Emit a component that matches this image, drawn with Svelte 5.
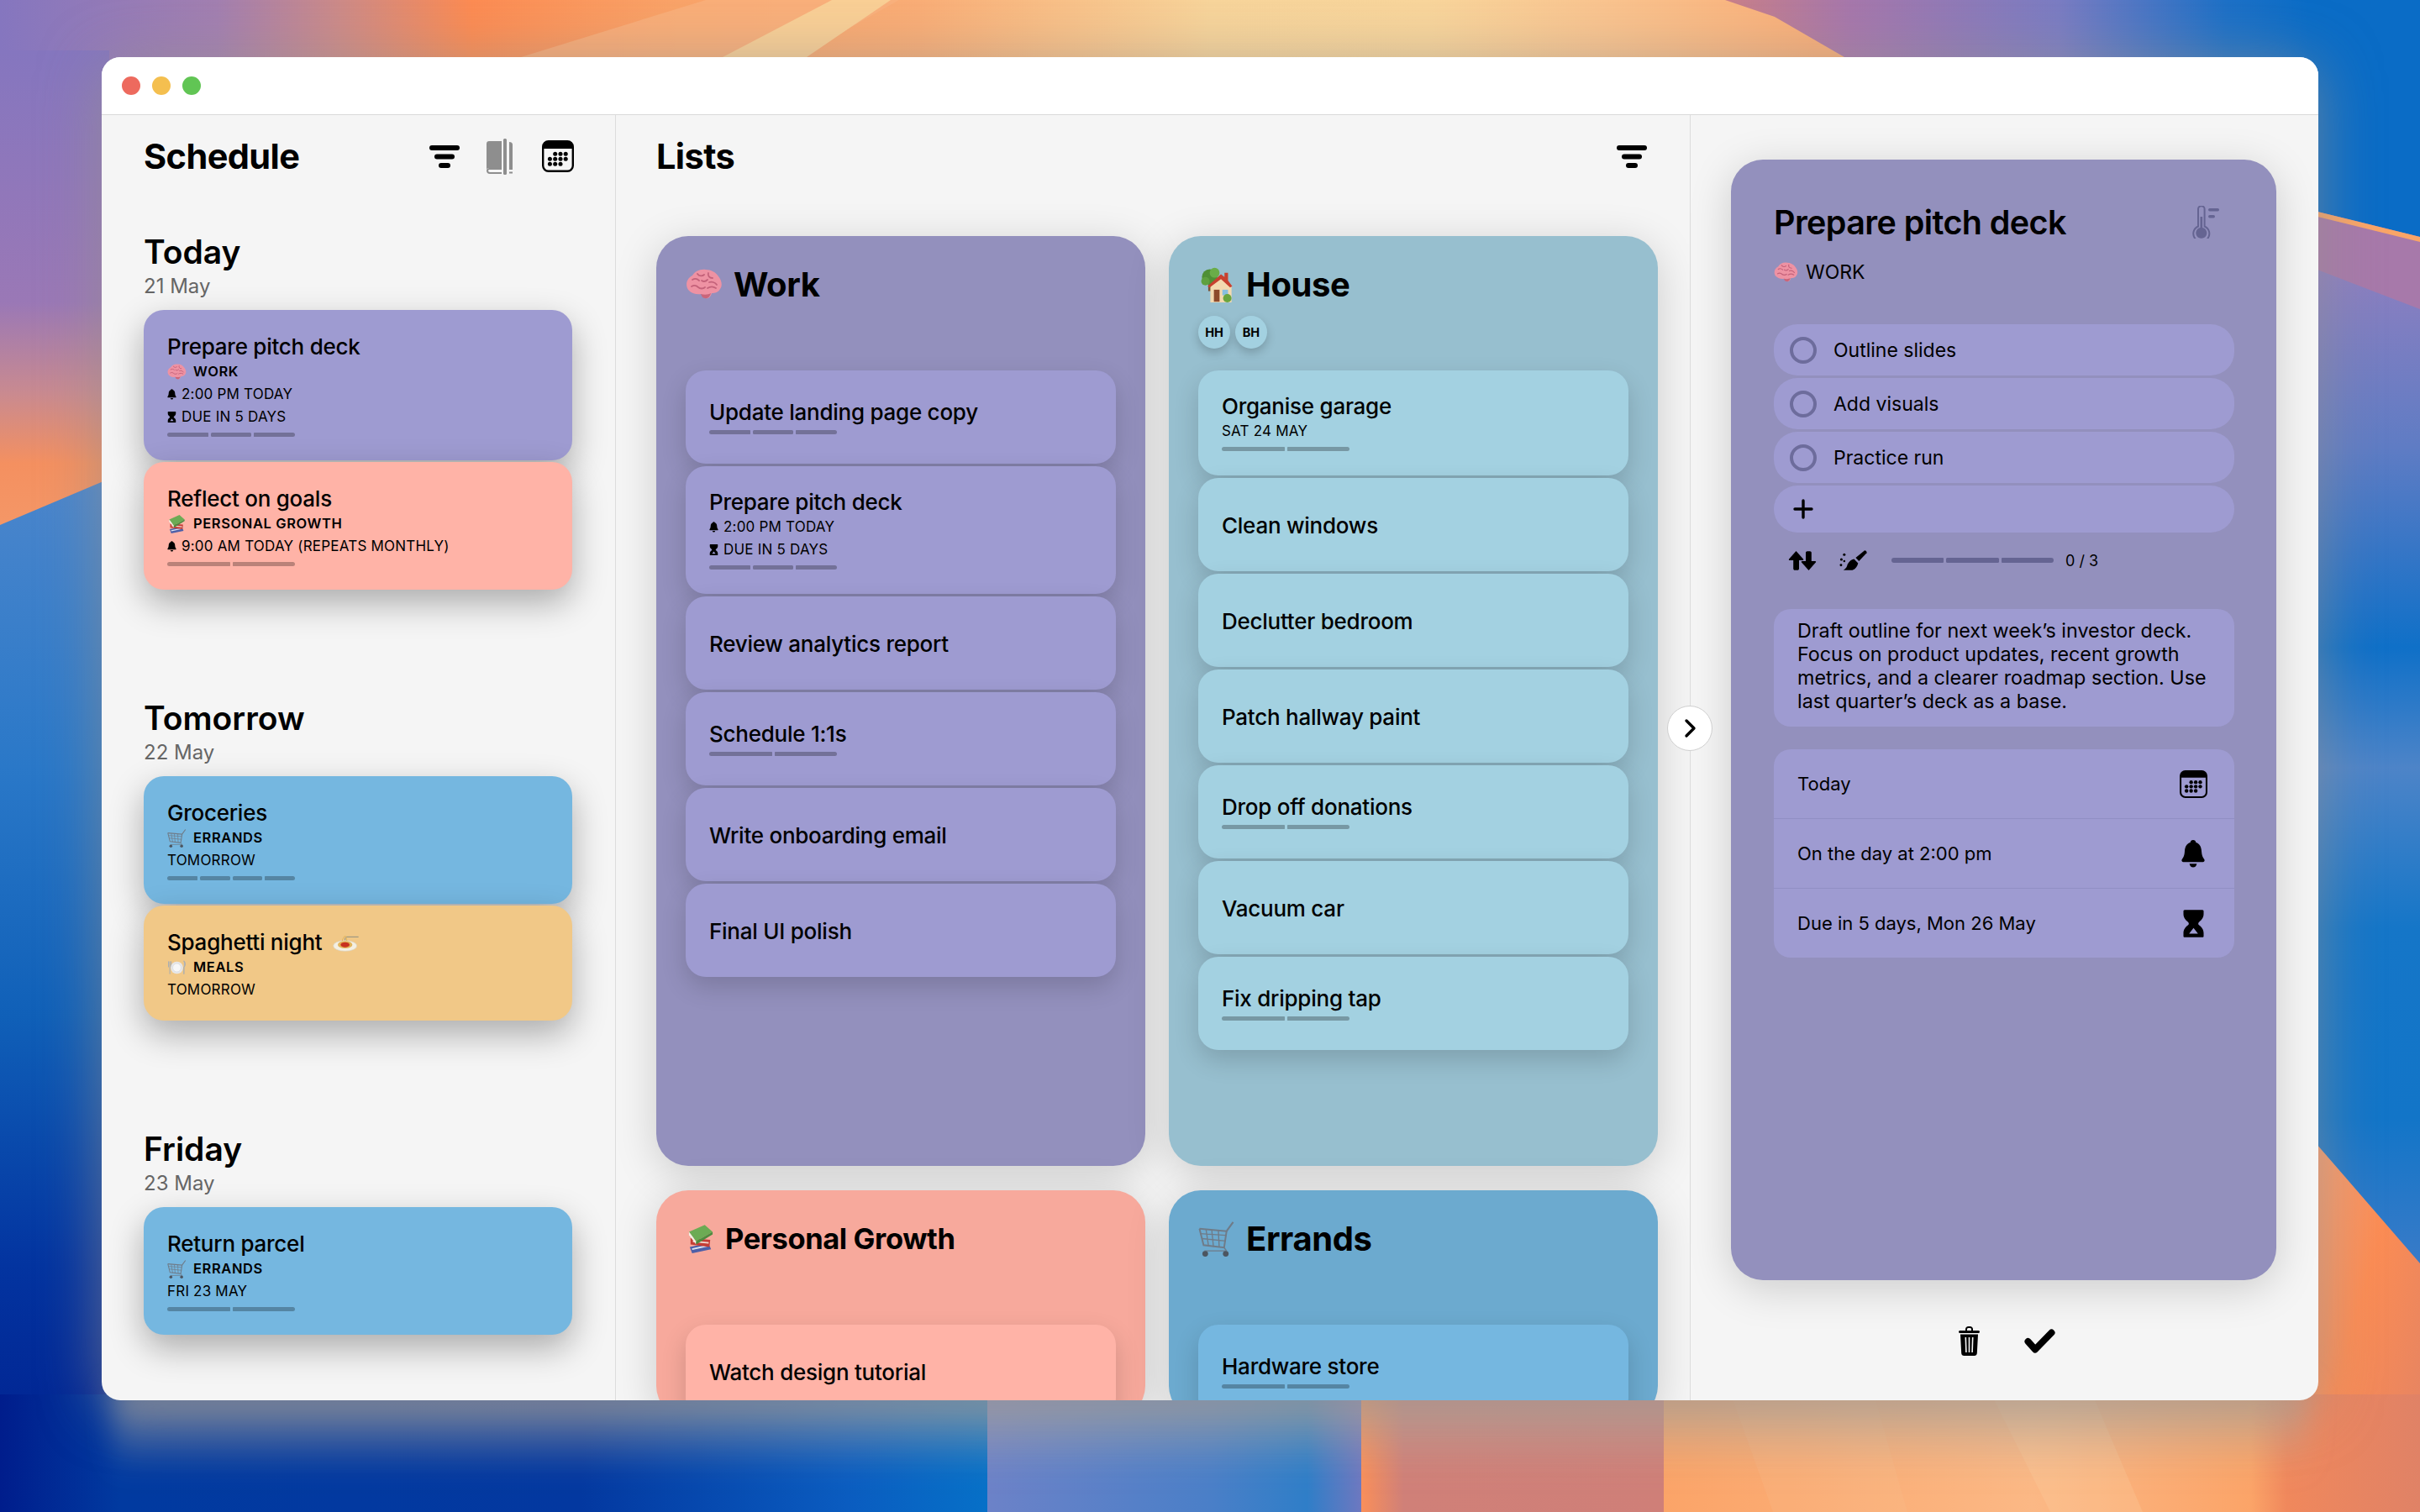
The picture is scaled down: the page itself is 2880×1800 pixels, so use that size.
<script lang="ts">
	type Task = {
		title: string;
		cat?: { icon: string; name: string };
		time?: string;
		due?: string;
		date?: string;
		bars?: number;
	};

	const work = { icon: 'brain', name: 'WORK' };
	const growth = { icon: 'books', name: 'PERSONAL GROWTH' };
	const errands = { icon: 'cart', name: 'ERRANDS' };
	const meals = { icon: 'plate', name: 'MEALS' };

	const schedule: { day: string; date: string; tasks: (Task & { tone: string; dish?: boolean })[] }[] = [
		{
			day: 'Today',
			date: '21 May',
			tasks: [
				{ title: 'Prepare pitch deck', tone: 'purple', cat: work, time: '2:00 PM TODAY', due: 'DUE IN 5 DAYS', bars: 3 },
				{ title: 'Reflect on goals', tone: 'salmon', cat: growth, time: '9:00 AM TODAY (REPEATS MONTHLY)', bars: 2 }
			]
		},
		{
			day: 'Tomorrow',
			date: '22 May',
			tasks: [
				{ title: 'Groceries', tone: 'blue', cat: errands, date: 'TOMORROW', bars: 4 },
				{ title: 'Spaghetti night', tone: 'sand', cat: meals, date: 'TOMORROW', dish: true }
			]
		},
		{
			day: 'Friday',
			date: '23 May',
			tasks: [{ title: 'Return parcel', tone: 'blue', cat: errands, date: 'FRI 23 MAY', bars: 2 }]
		}
	];

	const lists: { name: string; icon: string; tone: string; small?: boolean; people?: string[]; tasks: Task[] }[] = [
		{
			name: 'Work',
			icon: 'brain',
			tone: 'purple',
			tasks: [
				{ title: 'Update landing page copy', bars: 3 },
				{ title: 'Prepare pitch deck', time: '2:00 PM TODAY', due: 'DUE IN 5 DAYS', bars: 3 },
				{ title: 'Review analytics report' },
				{ title: 'Schedule 1:1s', bars: 2 },
				{ title: 'Write onboarding email' },
				{ title: 'Final UI polish' }
			]
		},
		{
			name: 'House',
			icon: 'house',
			tone: 'aqua',
			people: ['HH', 'BH'],
			tasks: [
				{ title: 'Organise garage', date: 'SAT 24 MAY', bars: 2 },
				{ title: 'Clean windows' },
				{ title: 'Declutter bedroom' },
				{ title: 'Patch hallway paint' },
				{ title: 'Drop off donations', bars: 2 },
				{ title: 'Vacuum car' },
				{ title: 'Fix dripping tap', bars: 2 }
			]
		},
		{
			name: 'Personal Growth',
			icon: 'books',
			tone: 'salmon',
			small: true,
			tasks: [{ title: 'Watch design tutorial' }]
		},
		{
			name: 'Errands',
			icon: 'cart',
			tone: 'blue',
			tasks: [{ title: 'Hardware store', bars: 2 }]
		}
	];

	const subtasks = ['Outline slides', 'Add visuals', 'Practice run'];
</script>

{#snippet emoji(name, cls)}
	<svg class="emoji {cls}" aria-hidden="true"><use href="#e-{name}" /></svg>
{/snippet}

{#snippet bars(count)}
	<div class="bars">
		{#each Array(count) as _}
			<span></span>
		{/each}
	</div>
{/snippet}

{#snippet filterIcon()}
	<svg class="ic-filter" viewBox="0 0 36 27" aria-hidden="true">
		<rect x="0" y="0" width="36" height="6" rx="3" />
		<rect x="6" y="10.5" width="24" height="6" rx="3" />
		<rect x="11" y="21" width="14" height="6" rx="3" />
	</svg>
{/snippet}

{#snippet calendarIcon(cls)}
	<svg class={cls} viewBox="0 0 38 38" aria-hidden="true">
		<rect x="1.2" y="1.2" width="35.6" height="35.6" rx="6.5" fill="none" stroke="#000" stroke-width="2.4" />
		<path d="M7 1h24a6 6 0 0 1 6 6v3H1V7a6 6 0 0 1 6-6z" />
		<g>
			<circle cx="15.7" cy="16.3" r="2.5" /><circle cx="22" cy="16.3" r="2.5" /><circle cx="28.2" cy="16.3" r="2.5" />
			<circle cx="9.4" cy="22.3" r="2.5" /><circle cx="15.7" cy="22.3" r="2.5" /><circle cx="22" cy="22.3" r="2.5" /><circle cx="28.2" cy="22.3" r="2.5" />
			<circle cx="9.4" cy="28.2" r="2.5" /><circle cx="15.7" cy="28.2" r="2.5" /><circle cx="22" cy="28.2" r="2.5" />
		</g>
	</svg>
{/snippet}

{#snippet bellIcon(cls)}
	<svg class={cls} viewBox="0 0 30 34" aria-hidden="true">
		<path d="M15 0c2 0 3.2 1.3 3.5 3 4.500 1.300 6.500 5.300 6.800 10.500.3 5 1.200 7.500 3.200 10 1 1.300.6 3.500-1.500 3.500H3c-2.100 0-2.500-2.200-1.500-3.500 2-2.500 2.900-5 3.200-10C5 8.300 7 4.300 11.500 3 11.800 1.300 13 0 15 0z" />
		<path d="M10.500 29h9c-.4 2.800-2.200 4.500-4.500 4.500s-4.100-1.700-4.500-4.500z" />
	</svg>
{/snippet}

{#snippet glassIcon(cls)}
	<svg class={cls} viewBox="0 0 26 34" aria-hidden="true">
		<path fill-rule="evenodd" d="M2 0h22c1 0 1.500.8 1.500 1.500V5c0 4.500-2.500 7.500-5.500 9.800-1.500 1.100-1.500 3.300 0 4.400 3 2.300 5.500 5.300 5.500 9.800v3.500c0 .7-.5 1.500-1.500 1.500H2c-1 0-1.500-.8-1.500-1.500V29c0-4.500 2.500-7.500 5.500-9.800 1.500-1.100 1.500-3.300 0-4.400C3 12.500.5 9.500.5 5V1.500C.5.800 1 0 2 0zM13 22.500 7.500 29.500h11z" />
	</svg>
{/snippet}

{#snippet meta(task)}
	{#if task.cat}
		<div class="row cat">{@render emoji(task.cat.icon, 'e-cat')}{task.cat.name}</div>
	{/if}
	{#if task.time}
		<div class="row">{@render bellIcon('ic-mini')}{task.time}</div>
	{/if}
	{#if task.due}
		<div class="row">{@render glassIcon('ic-mini')}{task.due}</div>
	{/if}
	{#if task.date}
		<div class="row">{task.date}</div>
	{/if}
	{#if task.bars}
		{@render bars(task.bars)}
	{/if}
{/snippet}

<svg class="defs" aria-hidden="true">
	<defs>
		<symbol id="e-brain" viewBox="0 0 44 38">
			<path d="M8 8c3-5 9-8 16-7 6 0 12 3 15 8 4 5 5 11 2 15-2 4-6 5-10 5-1 4-4 7-7 6-3 0-4-3-5-5-5 1-11 0-15-4C0 22-1 13 8 8z" fill="#ee92a3" />
			<path d="M30 29c-1 4-4 7-7 6-3 0-4-3-5-5 4 1 9 1 12-1z" fill="#c9657a" />
			<path d="M8 13c3-2 6-1 8 1M14 6c2 3 6 3 8 1M27 5c-1 3 1 6 5 6M7 21c3-2 6-1 8 1s6 2 8 0M19 14c3 2 5 1 7-1M28 16c3-1 7 0 9 3M26 23c3-2 7-2 10 0" fill="none" stroke="#c4627a" stroke-width="1.800" stroke-linecap="round" />
		</symbol>
		<symbol id="e-books" viewBox="0 0 32 36">
			<path d="M2 28l24-5 3 8-24 5z" fill="#4d5fa8" />
			<path d="M5 31l22-5" stroke="#dfe3f2" stroke-width="2" />
			<path d="M3 17l25 2-1 9-24-3z" fill="#c43d36" />
			<path d="M6 21l20 2" stroke="#f1d9d0" stroke-width="2" />
			<path d="M1 9L21 0l10 9-21 12z" fill="#6cab54" />
			<path d="M1 9l9 12 0 4-9-12z" fill="#f0f0e4" />
			<path d="M10 21l21-12v3L10 25z" fill="#4d8a3f" />
		</symbol>
		<symbol id="e-house" viewBox="0 0 44 50">
			<path d="M10 24h4v10h-4z" fill="#7a5233" />
			<circle cx="12" cy="14" r="11" fill="#4f8f35" />
			<circle cx="6" cy="20" r="6" fill="#5fa03f" />
			<circle cx="19" cy="8" r="7" fill="#6aad48" />
			<path d="M13 26l15-12 15 12v24H13z" fill="#f3d9b0" />
			<path d="M9 27L28 10l5 4 0-6h5v11l6 8-3 2-13-12-16 12z" fill="#c8402f" />
			<path d="M18 32h8v17h-8z" fill="#8d4a2b" />
			<path d="M30 32h8v8h-8z" fill="#89bfe0" />
			<circle cx="37" cy="44" r="6" fill="#6aa53f" />
		</symbol>
		<symbol id="e-cart" viewBox="0 0 44 43">
			<g fill="none" stroke="#6f7b88" stroke-width="1.400">
				<path d="M1 9l33 3 8-11" stroke-width="2.200" />
				<path d="M1 9l5 20 25 3 3-20" stroke-width="2" />
				<path d="M2 15l31 2M4 21l29 3M9 10l3 20M16 11l2 20M24 11l1 20M7 36h27" />
				<path d="M31 32l3 4" />
			</g>
			<circle cx="8" cy="39.500" r="3.500" fill="#4c5560" />
			<circle cx="33" cy="39.500" r="3.500" fill="#4c5560" />
		</symbol>
		<symbol id="e-plate" viewBox="0 0 44 36">
			<path d="M3 4v12M6 4v28M9 4v12" stroke="#a8adb3" stroke-width="2" fill="none" stroke-linecap="round" />
			<path d="M38 3c4 3 3 12 0 14v15" stroke="#a8adb3" stroke-width="2.500" fill="#b9bdc2" stroke-linecap="round" />
			<circle cx="22" cy="18" r="14" fill="#e6e7ea" />
			<circle cx="22" cy="18" r="9.500" fill="#f7f7f8" stroke="#cfd1d5" />
		</symbol>
		<symbol id="e-dish" viewBox="0 0 48 32">
			<ellipse cx="22" cy="22" rx="21" ry="9.500" fill="#f4efe2" stroke="#d8d1bf" />
			<ellipse cx="22" cy="20" rx="13" ry="6.500" fill="#e2b45a" />
			<ellipse cx="22" cy="20" rx="8" ry="4.500" fill="#c8321f" />
			<path d="M22 12c0-3 0-6 3-6h21" stroke="#8e8e80" stroke-width="1.500" fill="none" />
			<path d="M17 13c1-4 3-7 5-9 2 2 3 5 3 9" stroke="#e2b45a" stroke-width="1.500" fill="none" />
		</symbol>
		<linearGradient id="w-top" x1="0" x2="1" y1="0" y2="0">
			<stop offset="0" stop-color="#8576bf" />
			<stop offset="0.09" stop-color="#a27fb0" />
			<stop offset="0.14" stop-color="#cc8a88" />
			<stop offset="0.195" stop-color="#fc8b52" />
			<stop offset="0.28" stop-color="#f9a368" />
			<stop offset="0.38" stop-color="#f9ad76" />
			<stop offset="0.5" stop-color="#f7d49a" />
			<stop offset="0.59" stop-color="#f8d59b" />
			<stop offset="0.66" stop-color="#f9c48f" />
			<stop offset="0.75" stop-color="#f9ae78" />
		</linearGradient>
		<linearGradient id="w-top-right" x1="0" x2="1" y1="0" y2="0">
			<stop offset="0" stop-color="#c97f88" />
			<stop offset="0.18" stop-color="#a677ab" />
			<stop offset="0.48" stop-color="#7a7cc2" />
			<stop offset="0.72" stop-color="#1d70c6" />
			<stop offset="0.84" stop-color="#0a6cc6" />
			<stop offset="1" stop-color="#0a6cc6" />
		</linearGradient>
		<linearGradient id="w-left-up" x1="0" x2="0" y1="0" y2="1">
			<stop offset="0" stop-color="#8576bf" />
			<stop offset="0.5" stop-color="#9a78b6" />
			<stop offset="0.68" stop-color="#c98a90" />
			<stop offset="0.82" stop-color="#f49060" />
			<stop offset="1" stop-color="#f49a6a" />
		</linearGradient>
		<linearGradient id="w-left-down" x1="0" x2="0" y1="0" y2="1">
			<stop offset="0" stop-color="#4b86cc" />
			<stop offset="0.28" stop-color="#2a78c8" />
			<stop offset="0.52" stop-color="#1060b8" />
			<stop offset="0.76" stop-color="#0334a0" />
			<stop offset="1" stop-color="#001d8c" />
		</linearGradient>
		<linearGradient id="w-right" x1="0" x2="0" y1="0" y2="1">
			<stop offset="0" stop-color="#8d7fc0" />
			<stop offset="0.18" stop-color="#5f7cc4" />
			<stop offset="0.38" stop-color="#0f70c8" />
			<stop offset="0.5" stop-color="#4d84c8" />
			<stop offset="0.66" stop-color="#1576c8" />
			<stop offset="0.85" stop-color="#1275c8" />
			<stop offset="1" stop-color="#3a7bc8" />
		</linearGradient>
		<linearGradient id="w-right-low" x1="0" x2="1" y1="0" y2="1">
			<stop offset="0" stop-color="#f5a075" />
			<stop offset="0.45" stop-color="#fb8c54" />
			<stop offset="1" stop-color="#e08266" />
		</linearGradient>
		<linearGradient id="w-bottom" x1="0" x2="1" y1="0" y2="0">
			<stop offset="0" stop-color="#001d8c" />
			<stop offset="0.05" stop-color="#013aa0" />
			<stop offset="0.24" stop-color="#0338a0" />
			<stop offset="0.35" stop-color="#0a5cc0" />
			<stop offset="0.408" stop-color="#0670c8" />
			<stop offset="0.408" stop-color="#6c82c8" />
			<stop offset="0.5" stop-color="#4a7fc8" />
			<stop offset="0.54" stop-color="#2f7ec8" />
			<stop offset="0.5625" stop-color="#6d78c0" />
			<stop offset="0.5625" stop-color="#f98f5a" />
			<stop offset="0.58" stop-color="#d08078" />
			<stop offset="0.6875" stop-color="#cf7f78" />
			<stop offset="0.6875" stop-color="#fba468" />
			<stop offset="0.84" stop-color="#fbb885" />
			<stop offset="0.93" stop-color="#fba468" />
			<stop offset="0.945" stop-color="#f0885c" />
			<stop offset="1" stop-color="#e08266" />
		</linearGradient>
		<linearGradient id="w-wash" x1="0" x2="0" y1="0" y2="1">
			<stop offset="0" stop-color="#b4aca0" stop-opacity="0.7" />
			<stop offset="0.35" stop-color="#b4aca0" stop-opacity="0.42" />
			<stop offset="1" stop-color="#b4aca0" stop-opacity="0" />
		</linearGradient>
		<filter id="w-soft" x="-5%" y="-30%" width="110%" height="160%">
			<feGaussianBlur stdDeviation="16" />
		</filter>
	</defs>
</svg>

<div class="desktop">
	<svg class="wallpaper" viewBox="0 0 2880 1800" aria-hidden="true">
		<rect x="0" y="0" width="2880" height="200" fill="url(#w-top)" />
		<path d="M840 0h230L950 68 620 68z" fill="#f9b27f" opacity="0.7" />
		<path d="M990 0h70L960 68H860z" fill="#f9cf95" />
		<path d="M2053 0l59 20 83 48 20 60H2880V0z" fill="url(#w-top-right)" />
		<rect x="2750" y="0" width="130" height="300" fill="#0a6cc6" />
		<rect x="0" y="60" width="130" height="600" fill="url(#w-left-up)" />
		<path d="M0 625l130-55V1800H0z" fill="url(#w-left-down)" />
		<path d="M2750 250l130 32v90l-130-50z" fill="#a779aa" />
		<path d="M2750 250l130 32v6l-130-32z" fill="#f9a568" />
		<path d="M2750 318l130 50V1510l-130-150z" fill="url(#w-right)" />
		<path d="M2750 1354l130 150V1800H2750z" fill="url(#w-right-low)" />
		<rect x="0" y="1660" width="2880" height="140" fill="url(#w-bottom)" />
		<path d="M2060 1660h170l40 140h-160z" fill="#fbc79a" opacity="0.14" />
		<path d="M2370 1660h120l60 140h-110z" fill="#fdd0a4" opacity="0.26" />
		<rect x="135" y="1650" width="2610" height="105" fill="url(#w-wash)" filter="url(#w-soft)" />
	</svg>

	<div class="window">
		<div class="titlebar">
			<span class="dot red"></span>
			<span class="dot yellow"></span>
			<span class="dot green"></span>
		</div>

		<div class="body">
			<aside class="sidebar">
				<header class="head">
					<h1>Schedule</h1>
					<div class="tools">
						{@render filterIcon()}
						<svg class="ic-book" viewBox="0 0 32 43" aria-hidden="true">
							<path d="M4 3h15v32H4c-1.500 0-3 .8-3 2V6c0-1.700 1.300-3 3-3z" />
							<path d="M1 38c0-2 1.500-3 3.500-3H19v2H5c-1 0-2 .5-2 1.300S4 40 5 40h14v2H5c-2.500 0-4-1.500-4-4z" />
							<rect x="21" y="0" width="4" height="43" rx="1.500" />
							<path d="M28 4c2.300 0 4 1 4 3v30h-4z" />
							<rect x="28" y="39.500" width="4" height="2" />
						</svg>
						{@render calendarIcon('ic-cal')}
					</div>
				</header>

				{#each schedule as group}
					<section class="group">
						<h2>{group.day}</h2>
						<div class="when">{group.date}</div>
						<div class="cards">
							{#each group.tasks as task}
								<article class="card tone-{task.tone}">
									<div class="title">
										{task.title}
										{#if task.dish}{@render emoji('dish', 'e-dish')}{/if}
									</div>
									{@render meta(task)}
								</article>
							{/each}
						</div>
					</section>
				{/each}
			</aside>

			<main class="lists">
				<header class="head">
					<h1>Lists</h1>
					<div class="tools">{@render filterIcon()}</div>
				</header>
				<div class="board">
					{#each lists as list}
						<section class="panel panel-{list.tone}">
							<div class="panel-head">
								<h2 class:small={list.small}>
									{@render emoji(list.icon, list.small ? 'e-head-small' : 'e-head')}{list.name}
								</h2>
								{#if list.people}
									<div class="people">
										{#each list.people as who}
											<span>{who}</span>
										{/each}
									</div>
								{/if}
							</div>
							<div class="items">
								{#each list.tasks as task}
									<article class="card item tone-{list.tone}">
										<div class="title">{task.title}</div>
										{@render meta(task)}
									</article>
								{/each}
							</div>
						</section>
					{/each}
				</div>
			</main>

			<aside class="detail">
				<section class="sheet">
					<div class="sheet-head">
						<h2>Prepare pitch deck</h2>
						<svg class="ic-thermo" viewBox="0 0 34 39" aria-hidden="true">
							<path d="M8 4a3.800 3.800 0 0 1 7.600 0v20.500a9.500 9.500 0 1 1-7.600 0z" fill="none" stroke="#656492" stroke-width="2" />
							<path d="M10.500 13h2.600v13a6.500 6.500 0 1 1-2.600 0z" fill="#656492" />
							<rect x="20" y="3" width="13" height="3.400" rx="1.700" fill="#656492" />
							<rect x="20" y="11" width="8" height="3.400" rx="1.700" fill="#656492" />
						</svg>
					</div>
					<div class="sheet-cat">{@render emoji('brain', 'e-sheet')}WORK</div>

					<div class="subtasks">
						{#each subtasks as sub}
							<div class="sub"><span class="ring"></span>{sub}</div>
						{/each}
						<div class="sub add">
							<svg class="ic-plus" viewBox="0 0 24 24" aria-hidden="true">
								<path d="M12 2v20M2 12h20" stroke="#000" stroke-width="3.400" stroke-linecap="round" />
							</svg>
						</div>
					</div>

					<div class="progress">
						<svg class="ic-swap" viewBox="0 0 34 23" aria-hidden="true">
							<path d="M9.500 0 18 9.500c.6.700.2 1.600-.7 1.600H13V21c0 1-.8 1.800-1.800 1.800H8c-1 0-1.800-.8-1.800-1.800V11.100H1.800c-.9 0-1.300-.9-.7-1.600z" />
							<path d="M24.500 23 16 13.500c-.6-.7-.2-1.600.7-1.600H21V2c0-1 .8-1.800 1.800-1.800H26c1 0 1.800.8 1.800 1.800v9.900h4.400c.9 0 1.300.9.700 1.600z" />
						</svg>
						<svg class="ic-broom" viewBox="0 0 34 24" aria-hidden="true">
							<path d="M31 0c1.500 0 3 1.500 2.500 3L24 13l-4-4z" />
							<path d="M18 10.500l5 5c-1 4-3 7-7 8.500H5c3-1.500 4.500-4 5-7 2-3.500 4.500-6 8-6.500z" />
							<circle cx="6" cy="5" r="1.600" /><circle cx="2.500" cy="11" r="1.600" /><circle cx="6" cy="13" r="1.300" /><circle cx="2" cy="18" r="1.500" />
						</svg>
						{@render bars(3)}
						<span class="count">0 / 3</span>
					</div>

					<p class="notes">Draft outline for next week’s investor deck. Focus on product updates, recent growth metrics, and a clearer roadmap section. Use last quarter’s deck as a base.</p>

					<div class="facts">
						<div class="fact">Today {@render calendarIcon('ic-fact-cal')}</div>
						<div class="fact">On the day at 2:00 pm {@render bellIcon('ic-fact-bell')}</div>
						<div class="fact">Due in 5 days, Mon 26 May {@render glassIcon('ic-fact-glass')}</div>
					</div>
				</section>

				<div class="actions">
					<svg class="ic-trash" viewBox="0 0 25 35" aria-hidden="true">
						<path d="M8 5V3.500C8 1.500 9.500 0 11.500 0h2C15.500 0 17 1.500 17 3.500V5h6.500c.8 0 1.500.6 1.500 1.500S24.300 8 23.500 8h-22C.7 8 0 7.300 0 6.500S.7 5 1.500 5zM10 5h5V3.500c0-.8-.6-1.500-1.500-1.500h-2C10.600 2 10 2.700 10 3.500z" fill-rule="evenodd" />
						<path d="M2 9.500h21L21.800 32c-.1 1.700-1.400 3-3.100 3H6.300c-1.700 0-3-1.300-3.100-3zM7.500 13l.6 18h1.600l-.6-18zm4.200 0v18h1.600V13zm4.200 0-.6 18h1.600l.6-18z" fill-rule="evenodd" />
					</svg>
					<svg class="ic-check" viewBox="0 0 37 29" aria-hidden="true">
						<path d="M4.500 15l8.500 9.500L32.500 4.500" fill="none" stroke="#000" stroke-width="8" stroke-linecap="round" stroke-linejoin="round" />
					</svg>
				</div>
			</aside>
		</div>

		<button class="collapse" aria-label="Collapse">
			<svg viewBox="0 0 16 24" aria-hidden="true">
				<path d="M4 3l9 9-9 9" fill="none" stroke="#000" stroke-width="3.400" stroke-linecap="round" stroke-linejoin="round" />
			</svg>
		</button>
	</div>
</div>

<style>
	:global(body) {
		margin: 0;
		background: #1a5fb4;
	}

	.defs {
		height: 0;
		position: absolute;
		width: 0;
	}

	.desktop {
		box-sizing: border-box;
		font-family: Inter, 'Liberation Sans', sans-serif;
		height: 1800px;
		overflow: hidden;
		padding: 68px 121px 133px 121px;
		position: relative;
		width: 2880px;
	}

	.wallpaper {
		height: 1800px;
		left: 0;
		position: absolute;
		top: 0;
		width: 2880px;
	}

	.window {
		background: #f5f5f5;
		border-radius: 22px;
		box-shadow: 0 8px 70px rgba(150, 145, 140, 0.65);
		color: #000;
		display: flex;
		flex-direction: column;
		height: 1599px;
		overflow: hidden;
		position: relative;
	}

	.titlebar {
		align-items: center;
		background: #fff;
		border-bottom: 1px solid #d9d9d9;
		box-sizing: border-box;
		display: flex;
		flex: none;
		gap: 14px;
		height: 69px;
		padding-left: 24px;
	}

	.dot {
		border-radius: 50%;
		height: 22px;
		width: 22px;
	}

	.red { background: #ed6a5e; }
	.yellow { background: #f4bf4f; }
	.green { background: #61c554; }

	.body {
		display: flex;
		flex: 1;
		min-height: 0;
	}

	.sidebar {
		border-right: 1px solid #dcdcdc;
		box-sizing: border-box;
		flex: none;
		overflow: hidden;
		padding: 0 51px 0 50px;
		width: 612px;
	}

	.head {
		align-items: center;
		display: flex;
		height: 98px;
		justify-content: space-between;
	}

	.head h1 {
		font-size: 41.500px;
		font-weight: 700;
		letter-spacing: -0.6px;
		margin: 0;
	}

	.tools {
		align-items: center;
		display: flex;
		gap: 33px;
		margin-right: -2px;
	}

	.lists .tools {
		margin-right: 1px;
	}

	.ic-filter { height: 27px; width: 36px; }
	.ic-book { fill: #8e8e8e; height: 43px; margin-left: -2px; margin-right: 2px; width: 32px; }
	.ic-cal { height: 38px; width: 38px; }

	.group {
		margin-bottom: 129px;
	}

	.group:first-of-type {
		margin-top: 41px;
	}

	.group h2 {
		font-size: 39px;
		font-weight: 600;
		line-height: 48px;
		margin: 0;
	}

	.when {
		color: #666;
		font-size: 24px;
		line-height: 30px;
		margin: 2px 0 13px;
	}

	.cards {
		display: flex;
		flex-direction: column;
		gap: 2px;
	}

	.card {
		border-radius: 24px;
		box-shadow: 0 16px 40px rgba(0, 0, 0, 0.3);
		padding: 27px 28px 23px;
		position: relative;
	}

	.tone-purple { background: #9e9bd1; }
	.tone-salmon { background: #ffb3a7; }
	.tone-blue { background: #75b7e0; }
	.tone-sand { background: #f1c887; }
	.tone-aqua { background: #a3d1e1; }

	.title {
		align-items: center;
		display: flex;
		font-size: 26px;
		font-weight: 500;
		gap: 13px;
		letter-spacing: -0.25px;
		line-height: 33px;
	}

	.row {
		align-items: center;
		display: flex;
		font-size: 17px;
		gap: 6px;
		letter-spacing: 0.2px;
		line-height: 27px;
		white-space: nowrap;
	}

	.row.cat {
		font-size: 16.500px;
		font-weight: 600;
		gap: 8px;
		letter-spacing: 0.6px;
	}

	.ic-mini {
		flex: none;
		height: 13px;
		width: 11px;
	}

	.emoji {
		flex: none;
	}

	.e-cat { height: 22px; width: 23px; }
	.e-dish { height: 26px; width: 32px; }
	.e-head { height: 42px; width: 44px; }
	.e-head-small { height: 34px; width: 30px; }
	.e-sheet { height: 27px; width: 29px; }

	.bars {
		display: flex;
		gap: 3px;
		margin: 5px 0;
		width: 152px;
	}

	.bars span {
		background: rgba(0, 0, 0, 0.27);
		border-radius: 1.500px;
		flex: 1;
		height: 5px;
	}

	.bars span:first-child { border-radius: 3px 1px 1px 3px; }
	.bars span:last-child { border-radius: 1px 3px 3px 1px; }

	.lists {
		border-right: 1px solid #dcdcdc;
		box-sizing: border-box;
		flex: none;
		overflow: hidden;
		padding: 0 50px 0 48px;
		width: 1279px;
	}

	.board {
		display: grid;
		gap: 29px 28px;
		grid-template-columns: 582px 582px;
		grid-template-rows: 1107px auto;
		margin-top: 46px;
	}

	.panel {
		border-radius: 38px;
		box-shadow: 0 10px 50px rgba(0, 0, 0, 0.17);
		padding: 0 35px;
	}

	.panel-purple { background: #9390bd; }
	.panel-aqua { background: #97bfcf; }
	.panel-salmon { background: #f7a99c; }
	.panel-blue { background: #6caacf; }

	.panel-head {
		box-sizing: border-box;
		height: 160px;
		padding-top: 34px;
	}

	.panel-head h2 {
		align-items: center;
		display: flex;
		font-size: 40px;
		font-weight: 700;
		gap: 13px;
		letter-spacing: -0.4px;
		line-height: 48px;
		margin: 0;
	}

	.panel-head h2.small {
		font-size: 34.500px;
		gap: 14px;
		margin-left: 3px;
	}

	.people {
		display: flex;
		gap: 6px;
		margin-top: 13px;
	}

	.people span {
		align-items: center;
		background: #a3d1e1;
		border-radius: 50%;
		box-shadow: 0 5px 12px rgba(0, 0, 0, 0.2);
		display: flex;
		font-size: 14.500px;
		font-weight: 700;
		height: 39px;
		justify-content: center;
		width: 38px;
	}

	.items {
		display: flex;
		flex-direction: column;
		gap: 3px;
	}

	.item {
		box-shadow: 0 12px 30px rgba(0, 0, 0, 0.16);
		box-sizing: border-box;
		display: flex;
		flex-direction: column;
		justify-content: center;
		min-height: 111px;
		padding: 26px 28px 24px;
	}

	.detail {
		box-sizing: border-box;
		flex: 1;
		min-width: 0;
		padding: 53px 50px 0 48px;
	}

	.sheet {
		background: #9390bd;
		border-radius: 38px;
		box-shadow: 0 10px 50px rgba(0, 0, 0, 0.17);
		box-sizing: border-box;
		height: 1334px;
		padding: 50px 50px 0 51px;
	}

	.sheet-head {
		align-items: flex-start;
		display: flex;
		justify-content: space-between;
	}

	.sheet-head h2 {
		font-size: 39.500px;
		font-weight: 600;
		letter-spacing: -0.6px;
		line-height: 50px;
		margin: 0;
	}

	.ic-thermo {
		height: 39px;
		margin: 5px 17px 0 0;
		width: 34px;
	}

	.sheet-cat {
		align-items: center;
		display: flex;
		font-size: 23px;
		gap: 9px;
		line-height: 28px;
		margin-top: 20px;
	}

	.subtasks {
		display: flex;
		flex-direction: column;
		gap: 3px;
		margin-top: 48px;
	}

	.sub {
		align-items: center;
		background: #9e9bd1;
		border-radius: 28px;
		display: flex;
		font-size: 23px;
		gap: 20px;
		height: 61px;
		padding-left: 19px;
	}

	.sub.add {
		height: 56px;
		padding-left: 23px;
	}

	.ring {
		border: 4px solid #6d6c9c;
		border-radius: 50%;
		box-sizing: border-box;
		height: 32px;
		width: 32px;
	}

	.ic-plus { height: 24px; width: 24px; }

	.progress {
		align-items: center;
		display: flex;
		height: 66px;
		padding-left: 17px;
	}

	.ic-swap { height: 23px; margin-right: 27px; width: 34px; }
	.ic-broom { height: 24px; margin-right: 29px; width: 33px; }

	.progress .bars {
		margin: 0;
		width: 193px;
	}

	.progress .bars span {
		background: #656492;
		height: 6px;
	}

	.count {
		font-size: 18px;
		margin-left: 14px;
	}

	.notes {
		background: #9e9bd1;
		border-radius: 20px;
		box-sizing: border-box;
		font-size: 23.300px;
		line-height: 28px;
		margin: 25px 0 0;
		min-height: 140px;
		padding: 12px 28px 14px;
	}

	.facts {
		background: #9e9bd1;
		border-radius: 20px;
		margin-top: 27px;
		overflow: hidden;
	}

	.fact {
		align-items: center;
		display: flex;
		font-size: 22px;
		height: 82px;
		justify-content: space-between;
		padding: 0 32px 0 28px;
	}

	.fact + .fact {
		border-top: 1px solid #918fc4;
	}

	.ic-fact-cal { height: 33px; width: 33px; }
	.ic-fact-bell { height: 33px; margin-right: 2px; width: 30px; }
	.ic-fact-glass { height: 33px; margin-right: 4px; width: 25px; }

	.actions {
		align-items: center;
		display: flex;
		gap: 53px;
		justify-content: center;
		margin-top: 55px;
		padding-left: 8px;
	}

	.ic-trash { height: 35px; width: 25px; }
	.ic-check { height: 29px; width: 37px; }

	.collapse {
		align-items: center;
		background: #fff;
		border: 1px solid #cfcfcf;
		border-radius: 50%;
		display: flex;
		height: 54px;
		justify-content: center;
		left: 1863px;
		padding: 0;
		position: absolute;
		top: 772px;
		width: 54px;
	}

	.collapse svg { height: 24px; width: 16px; }
</style>
